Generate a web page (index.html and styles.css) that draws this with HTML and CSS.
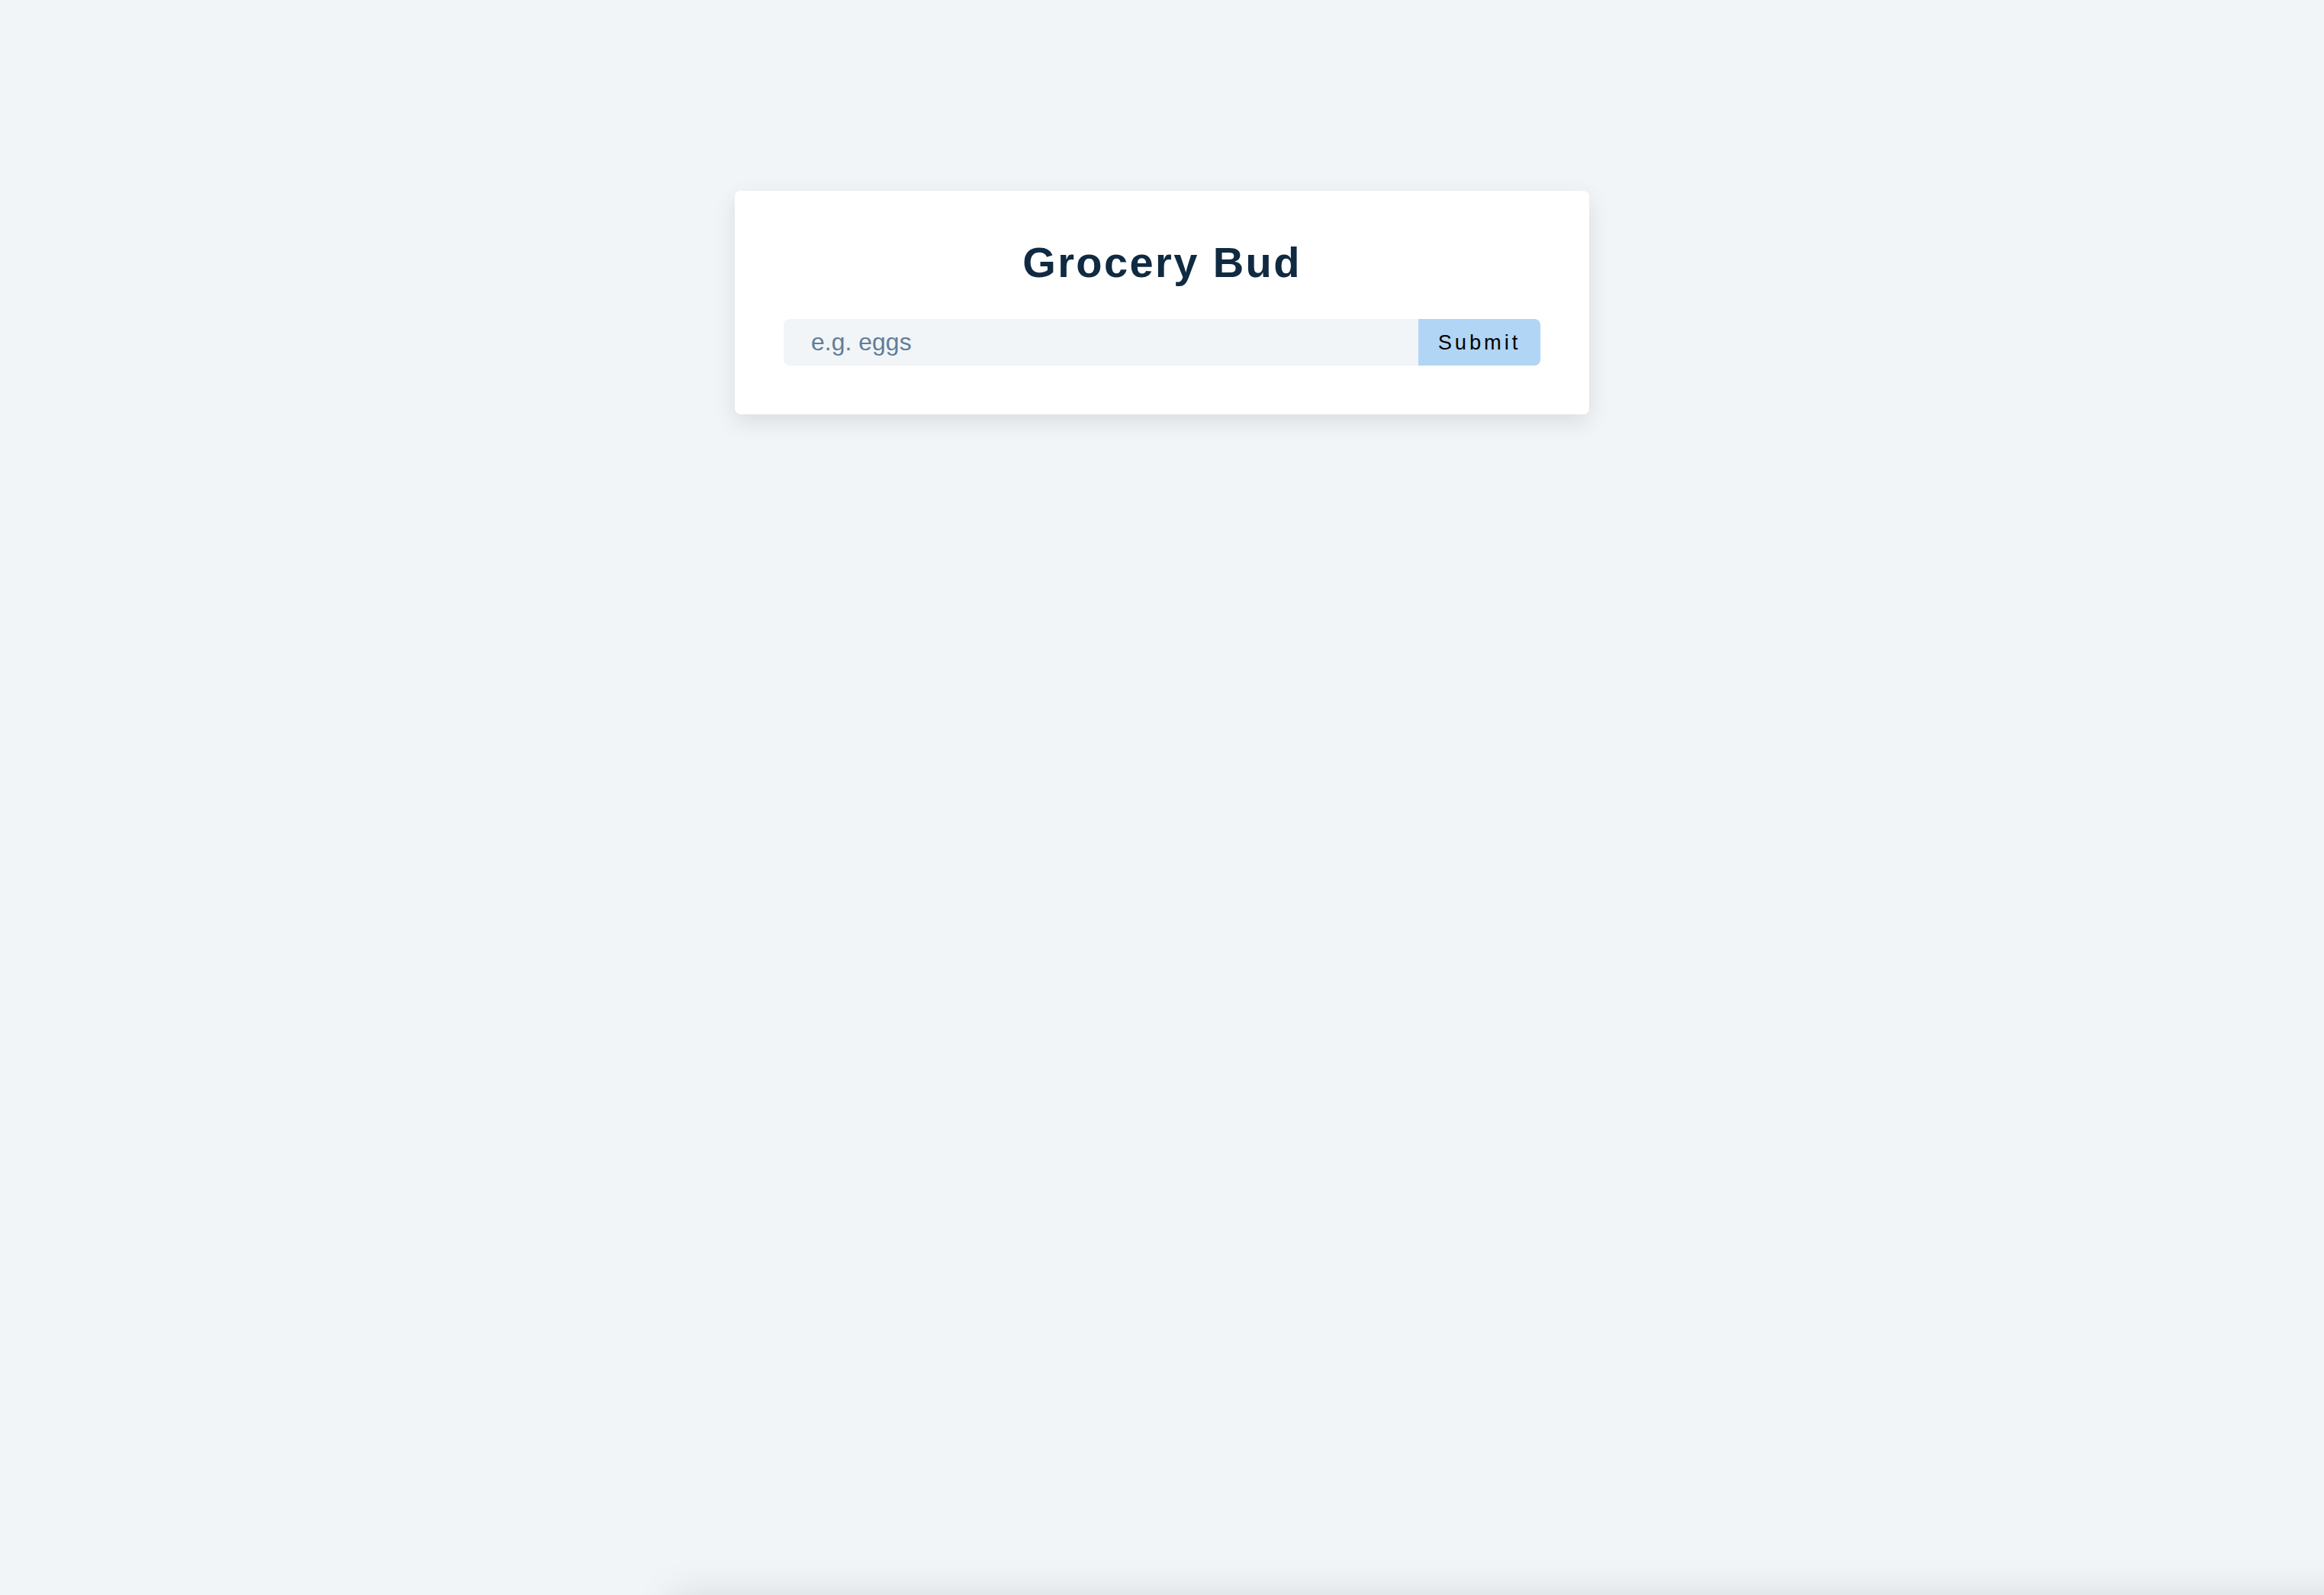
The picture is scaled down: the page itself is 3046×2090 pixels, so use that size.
FILE: index.html
```html
<!DOCTYPE html>
<html lang="en">
<head>
<meta charset="utf-8">
<title>Grocery Bud</title>
<link rel="stylesheet" href="styles.css">
</head>
<body>
<main class="page">
  <section class="section-center">
    <form class="grocery-form">
      <h3 class="title">Grocery Bud</h3>
      <div class="form-control">
        <input type="text" class="grocery" placeholder="e.g. eggs">
        <button type="submit" class="submit-btn">Submit</button>
      </div>
    </form>
  </section>
</main>
<div class="offscreen-panel"></div>
</body>
</html>
```

FILE: styles.css
```css
* {
  box-sizing: border-box;
  margin: 0;
  padding: 0;
}

html, body {
  height: 100%;
}

body {
  background: #f1f5f8;
  font-family: "Liberation Sans", Arial, Helvetica, sans-serif;
  color: #102a42;
  overflow: hidden;
}

.page {
  padding-top: 250px;
}

.section-center {
  width: 1120px;
  margin: 0 auto;
  background: #ffffff;
  border-radius: 8px;
  padding: 64px;
  box-shadow: 0 10px 30px rgba(0, 0, 0, 0.1);
}

.title {
  color: #102a42;
  font-size: 56px;
  line-height: 1;
  font-weight: 700;
  letter-spacing: 2.4px;
  text-align: center;
  padding-top: 2px;
  margin-bottom: 46px;
}

.form-control {
  display: flex;
  justify-content: center;
  height: 61px;
}

.grocery {
  flex: 1 0 auto;
  padding: 8px 8px 8px 32px;
  background: #f1f5f8;
  border: 4px solid transparent;
  border-top-left-radius: 8px;
  border-bottom-left-radius: 8px;
  font-family: "Liberation Sans", Arial, Helvetica, sans-serif;
  font-size: 32px;
  color: #617d98;
  outline: none;
}

.grocery::placeholder {
  color: #617d98;
}

.submit-btn {
  flex: 0 0 160px;
  background: #b1d5f4;
  border: none;
  border-top-right-radius: 8px;
  border-bottom-right-radius: 8px;
  font-family: "Liberation Sans", Arial, Helvetica, sans-serif;
  font-size: 27.2px;
  letter-spacing: 4px;
  color: #000000;
  padding: 8px;
  cursor: pointer;
}

.offscreen-panel {
  position: fixed;
  top: 100vh;
  left: 880px;
  right: -200px;
  height: 200px;
  background: #ffffff;
  box-shadow: 0 0 50px rgba(0, 0, 0, 0.11);
}
```
